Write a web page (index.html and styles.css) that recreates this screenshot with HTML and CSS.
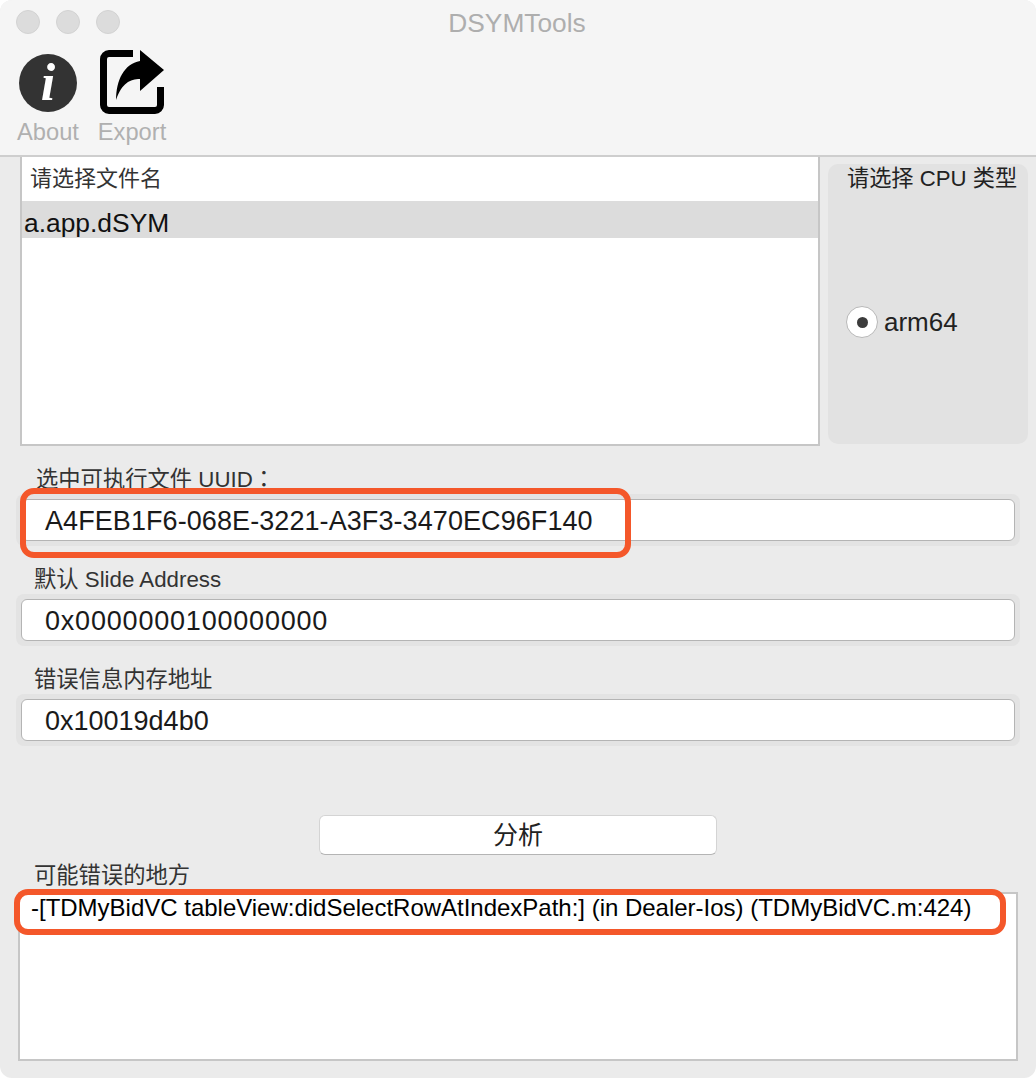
FILE: index.html
```html
<!DOCTYPE html>
<html lang="en">
<head>
  <title>DSYMTools</title>
  <meta charset="utf-8">
  <link rel="stylesheet" href="styles.css">
</head>
<body>
<div class="window">

  <div class="toolbar">
    <div class="titlebar">
      <div class="lights">
        <span class="light"></span>
        <span class="light"></span>
        <span class="light"></span>
      </div>
      <div class="title">DSYMTools</div>
    </div>
    <div class="tools">
      <div class="tool tool-about">
        <svg class="tool-icon" width="60" height="66" viewBox="0 0 60 66">
          <circle cx="30" cy="33" r="29" fill="#333"/>
          <text x="30" y="50" text-anchor="middle" class="info-i">i</text>
        </svg>
        <span class="tool-label">About</span>
      </div>
      <div class="tool tool-export">
        <svg class="tool-icon" width="66" height="66" viewBox="0 0 66 66">
          <path d="M33 3.500H9A5.500 5.500 0 0 0 3.500 9V55A5.500 5.500 0 0 0 9 60.500H55A5.500 5.500 0 0 0 60.500 55V37" fill="none" stroke="#000" stroke-width="7"/>
          <path d="M40 0L64 20L40 41V29C30 29 22 33 16 50C16 30 24 14 40 11Z" fill="#000"/>
        </svg>
        <span class="tool-label">Export</span>
      </div>
    </div>
  </div>

  <div class="content">
    <div class="top-row">
      <div class="file-list">
        <div class="list-head">请选择文件名</div>
        <div class="list-row">a.app.dSYM</div>
      </div>
      <div class="cpu-panel">
        <div class="cpu-title">请选择 CPU 类型</div>
        <div class="cpu-body">
          <span class="radio"></span>
          <span class="radio-label">arm64</span>
        </div>
      </div>
    </div>

    <div class="field field-uuid">
      <div class="field-label label-uuid">选中可执行文件 UUID<span class="colon">：</span></div>
      <div class="field-well"><div class="field-input input-uuid">A4FEB1F6-068E-3221-A3F3-3470EC96F140</div></div>
    </div>
    <div class="field">
      <div class="field-label">默认 Slide Address</div>
      <div class="field-well"><div class="field-input input-digits">0x0000000100000000</div></div>
    </div>
    <div class="field">
      <div class="field-label">错误信息内存地址</div>
      <div class="field-well"><div class="field-input">0x10019d4b0</div></div>
    </div>

    <div class="action"><div class="button">分析</div></div>

    <div class="field-label label-result">可能错误的地方</div>
    <div class="result">-[TDMyBidVC tableView:didSelectRowAtIndexPath:] (in Dealer-Ios) (TDMyBidVC.m:424)</div>
  </div>

  <div class="mark mark-uuid"></div>
  <div class="mark mark-result"></div>
</div>
</body>
</html>
```

FILE: styles.css
```css
html, body {
  margin: 0;
  padding: 0;
  background: #fff;
}

body {
  font-family: "Liberation Sans", "Noto Sans CJK SC", sans-serif;
  color: #222;
}

.window {
  position: relative;
  width: 1036px;
  height: 1078px;
  background: #ebebeb;
  border-radius: 12px;
  overflow: hidden;
}

/* toolbar */
.toolbar {
  height: 157px;
  box-sizing: border-box;
  background: #f5f5f5;
  border-bottom: 2px solid #cecece;
}

.titlebar {
  position: relative;
  height: 46px;
  display: flex;
  align-items: center;
  justify-content: center;
}

.lights {
  position: absolute;
  left: 16px;
  top: 10px;
  display: flex;
  gap: 16px;
}

.light {
  width: 22px;
  height: 22px;
  border: 1px solid #d2d2d2;
  border-radius: 50%;
  background: #dcdcdc;
}

.title {
  margin-left: -2px;
  font-size: 26.300px;
  color: #aeaeae;
}

.tools {
  display: flex;
  padding-left: 19px;
  gap: 19px;
}

.tool {
  display: flex;
  flex-direction: column;
  align-items: center;
  width: 62px;
}

.tool-about {
  width: 58px;
}

.tool-export {
  width: 66px;
  margin-left: 4px;
}

.tool-icon {
  display: block;
  flex: none;
  margin-top: 4px;
}

.info-i {
  font-family: "Liberation Serif", serif;
  font-style: italic;
  font-weight: bold;
  font-size: 52px;
  fill: #fff;
}

.tool-label {
  margin-top: 2px;
  font-size: 23.700px;
  line-height: 28px;
  color: #b0b0b0;
  white-space: nowrap;
}

.tool-export .tool-label {
  margin-left: -2px;
}

/* file list + cpu */
.content {
  padding: 0 8px 0 16px;
}

.top-row {
  display: flex;
  align-items: flex-start;
  padding-left: 4px;
  gap: 8px;
}

.file-list {
  flex: none;
  width: 800px;
  height: 289px;
  box-sizing: border-box;
  background: #fff;
  border: 2px solid #c6c6c6;
  border-top: 0;
}

.list-head {
  height: 44px;
  padding-left: 8px;
  font-size: 22px;
  line-height: 44px;
  color: #333;
}

.list-row {
  height: 37px;
  padding-left: 2px;
  background: #dcdcdc;
  font-size: 26.400px;
  line-height: 44px;
  color: #111;
}

.cpu-panel {
  flex: none;
  width: 200px;
  height: 280px;
  margin-top: 7px;
  box-sizing: border-box;
  display: flex;
  flex-direction: column;
  background: #e2e2e2;
  border-radius: 10px;
}

.cpu-title {
  padding-left: 19px;
  font-size: 22.200px;
  line-height: 29px;
  white-space: nowrap;
}

.cpu-body {
  display: flex;
  align-items: center;
  gap: 6px;
  margin-top: 113px;
  padding-left: 18px;
}

.radio {
  width: 32px;
  height: 32px;
  box-sizing: border-box;
  display: flex;
  align-items: center;
  justify-content: center;
  background: #fff;
  border: 1px solid #b8b8b8;
  border-radius: 50%;
}

.radio::before {
  content: "";
  width: 11px;
  height: 11px;
  border-radius: 50%;
  background: #3c3c3c;
}

.radio-label {
  font-size: 26px;
  line-height: 32px;
}

/* text fields */
.field-label {
  padding-left: 18px;
  font-size: 22.300px;
  line-height: 28px;
  color: #333;
}

.field {
  margin-top: 20px;
}

.label-uuid {
  padding-left: 20px;
}

.colon {
  font-family: "Noto Sans CJK TC", sans-serif;
  line-height: 0;
}

.field-well {
  width: 1004px;
  height: 52px;
  box-sizing: border-box;
  padding: 5px;
  background: #e3e3e3;
  border-radius: 8px;
}

.field-input {
  height: 42px;
  box-sizing: border-box;
  padding-left: 23px;
  background: #fff;
  border: 1px solid #b4b4b4;
  border-radius: 6px;
  font-size: 27px;
  line-height: 42px;
  color: #1a1a1a;
}

.input-uuid {
  letter-spacing: 0.080px;
}

.input-digits {
  letter-spacing: 0.800px;
}

/* analyse button */
.action {
  display: flex;
  margin-top: 69px;
  padding-left: 303px;
}

.button {
  width: 398px;
  height: 40px;
  box-sizing: border-box;
  background: #fff;
  border: 1px solid #d4d4d4;
  border-bottom-color: #b4b4b4;
  border-radius: 6px;
  text-align: center;
  font-size: 25px;
  line-height: 38px;
  color: #222;
}

.label-result {
  margin-top: 7px;
}

.result {
  width: 1000px;
  height: 169px;
  margin: 2px 0 0 2px;
  box-sizing: border-box;
  padding: 0 0 0 11px;
  background: #fff;
  border: 2px solid #c6c6c6;
  font-size: 24px;
  line-height: 28px;
  letter-spacing: -0.010px;
  color: #000;
  white-space: nowrap;
}

/* red annotation boxes drawn over the screenshot */
.mark {
  position: absolute;
  box-sizing: border-box;
  border: 6px solid #f4572a;
  border-radius: 14px;
}

.mark-uuid {
  left: 20px;
  top: 488px;
  width: 611px;
  height: 70px;
}

.mark-result {
  left: 14px;
  top: 889px;
  width: 992px;
  height: 46px;
}
```
